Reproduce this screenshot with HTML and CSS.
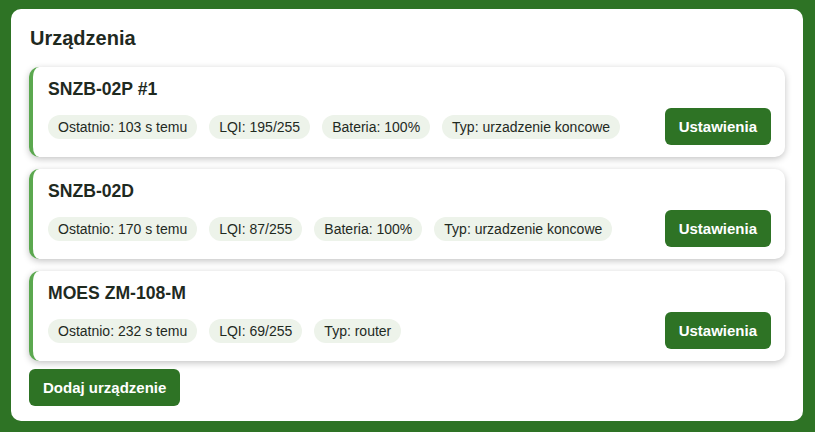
FILE: index.html
```html
<!DOCTYPE html>
<html lang="pl">
<head>
<meta charset="utf-8">
<title>Urządzenia</title>
<link rel="stylesheet" href="styles.css">
</head>
<body>
  <section class="panel">
    <h2 class="panel-title">Urządzenia</h2>

    <div class="device-list">
      <article class="device">
        <h3 class="device-name">SNZB-02P #1</h3>
        <div class="device-row">
          <div class="tags">
            <span class="tag">Ostatnio: 103 s temu</span>
            <span class="tag">LQI: 195/255</span>
            <span class="tag">Bateria: 100%</span>
            <span class="tag">Typ: urzadzenie koncowe</span>
          </div>
          <button class="btn" type="button">Ustawienia</button>
        </div>
      </article>

      <article class="device">
        <h3 class="device-name">SNZB-02D</h3>
        <div class="device-row">
          <div class="tags">
            <span class="tag">Ostatnio: 170 s temu</span>
            <span class="tag">LQI: 87/255</span>
            <span class="tag">Bateria: 100%</span>
            <span class="tag">Typ: urzadzenie koncowe</span>
          </div>
          <button class="btn" type="button">Ustawienia</button>
        </div>
      </article>

      <article class="device">
        <h3 class="device-name">MOES ZM-108-M</h3>
        <div class="device-row">
          <div class="tags">
            <span class="tag">Ostatnio: 232 s temu</span>
            <span class="tag">LQI: 69/255</span>
            <span class="tag">Typ: router</span>
          </div>
          <button class="btn" type="button">Ustawienia</button>
        </div>
      </article>
    </div>

    <button class="btn btn-add" type="button">Dodaj urządzenie</button>
  </section>
</body>
</html>
```

FILE: styles.css
```css
* {
  box-sizing: border-box;
}

html,
body {
  height: 100%;
}

body {
  margin: 0;
  padding: 9px 12px 11px 11px;
  background: #2e7325;
  font-family: "Liberation Sans", Arial, sans-serif;
  color: #1f2a1f;
}

.panel {
  background: #ffffff;
  border-radius: 10px;
  padding: 18px 18px 15px 18px;
  height: 100%;
}

.panel-title {
  margin: 0 0 17px 1px;
  font-size: 20px;
  line-height: 23px;
  font-weight: bold;
  color: #1f2a1f;
}

.device-list {
  display: flex;
  flex-direction: column;
  gap: 12px;
}

.device {
  background: #ffffff;
  border-left: 4px solid #5ba84f;
  border-radius: 10px;
  padding: 12px 14px 12px 15px;
  box-shadow: 0 2px 7px rgba(0, 0, 0, 0.24);
}

.device-name {
  margin: 0 0 9px 0;
  font-size: 17.6px;
  line-height: 20px;
  font-weight: bold;
  color: #1f2a1f;
}

.device-row {
  display: flex;
  align-items: center;
  justify-content: space-between;
  gap: 12px;
}

.tags {
  display: flex;
  flex-wrap: wrap;
  gap: 12px;
}

.tag {
  background: #edf3ea;
  border-radius: 12px;
  padding: 4px 10px;
  font-size: 14px;
  line-height: 16px;
  color: #1f2a1f;
}

.btn {
  border: 0;
  border-radius: 6px;
  background: #2e7325;
  color: #ffffff;
  font-family: "Liberation Sans", Arial, sans-serif;
  font-weight: bold;
  font-size: 15px;
  line-height: 17px;
  padding: 10px 14px;
  cursor: pointer;
}

.btn-add {
  margin-top: 8px;
  padding: 10px 14px;
}
```
